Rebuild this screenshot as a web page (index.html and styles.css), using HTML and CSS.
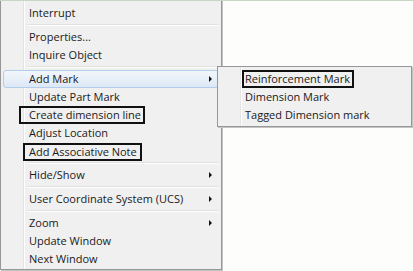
FILE: index.html
```html
<!DOCTYPE html>
<html lang="en">
<head>
    <meta charset="UTF-8">
    <meta name="viewport" content="width=device-width, initial-scale=1.0">
    <title>Context menu</title>
    <link rel="stylesheet" href="styles.css">
</head>
<body>
    <div class="menu">
        <div class="item">Interrupt</div>
        <div class="sep"></div>
        <div class="item">Properties...</div>
        <div class="item">Inquire Object</div>
        <div class="sep"></div>
        <div class="item sub active">Add Mark</div>
        <div class="item">Update Part Mark</div>
        <div class="item"><span class="mark mark-create">Create dimension line</span></div>
        <div class="item">Adjust Location</div>
        <div class="item"><span class="mark mark-note">Add Associative Note</span></div>
        <div class="sep"></div>
        <div class="item sub">Hide/Show</div>
        <div class="sep"></div>
        <div class="item sub">User Coordinate System (UCS)</div>
        <div class="sep"></div>
        <div class="item sub">Zoom</div>
        <div class="item">Update Window</div>
        <div class="item">Next Window</div>
    </div>

    <!-- submenu of Add Mark -->
    <div class="menu submenu">
        <div class="item"><span class="mark mark-rebar">Reinforcement Mark</span></div>
        <div class="item">Dimension Mark</div>
        <div class="item">Tagged Dimension mark</div>
    </div>
</body>
</html>
```

FILE: styles.css
```css
*{
    box-sizing: border-box;
    margin: 0px;
    padding: 0px;
}
body{
    width: 413px;
    height: 271px;
    background: #fdfdfb;
    border-top: 1px solid #c9d6c4;
    position: relative;
    font-family: "Open Sans", "Noto Sans", sans-serif;
    font-size: 11px;
    color: #1a1a1a;
    overflow: hidden;
}
.menu{
    width: 222px;
    margin-top: -1px;
    padding: 3px 2px 1px 2px;
    border: 1px solid #979797;
    box-shadow: 1px 1px 0 #c4c4c4;
    background: linear-gradient(to right, #f0f0f0 0, #f0f0f0 22px, #e2e3e3 22px, #e2e3e3 23px, #fff 23px, #fff 24px, #f0f0f0 24px);
}
.item{
    height: 18px;
    line-height: 18px;
    padding-left: 26px;
    position: relative;
    white-space: nowrap;
}
.sub::after{
    content: "";
    position: absolute;
    right: 7px;
    top: 6px;
    border-left: 3px solid #111;
    border-top: 3px solid transparent;
    border-bottom: 3px solid transparent;
}
.active{
    border: 1px solid #b3cdec;
    border-radius: 3px;
    line-height: 16px;
    padding-left: 25px;
    background: linear-gradient(to bottom, #f3f7fc, #dde8f5);
}
.active::after{
    right: 6px;
    top: 5px;
}
.sep{
    height: 6px;
    margin-left: 24px;
    background: linear-gradient(to bottom, transparent 2px, #e0e0e0 2px, #e0e0e0 3px, #fff 3px, #fff 4px, transparent 4px);
}
.mark{
    display: inline-block;
    height: 18px;
    line-height: 14px;
    border: 2px solid #111;
    vertical-align: top;
}
.mark-create{
    margin-left: -10px;
    padding: 0 2px 0 8px;
}
.mark-note{
    margin: 1px 0 0 -6px;
    padding: 0 3px 0 4px;
}
.mark-rebar{
    margin-left: -3px;
    padding: 0 2px 0 1px;
}
.submenu{
    position: absolute;
    left: 217px;
    top: 65px;
    width: 195px;
    margin-top: 0;
    padding: 3px 2px 2px 2px;
}
.submenu .item{
    padding-left: 25px;
}
```
